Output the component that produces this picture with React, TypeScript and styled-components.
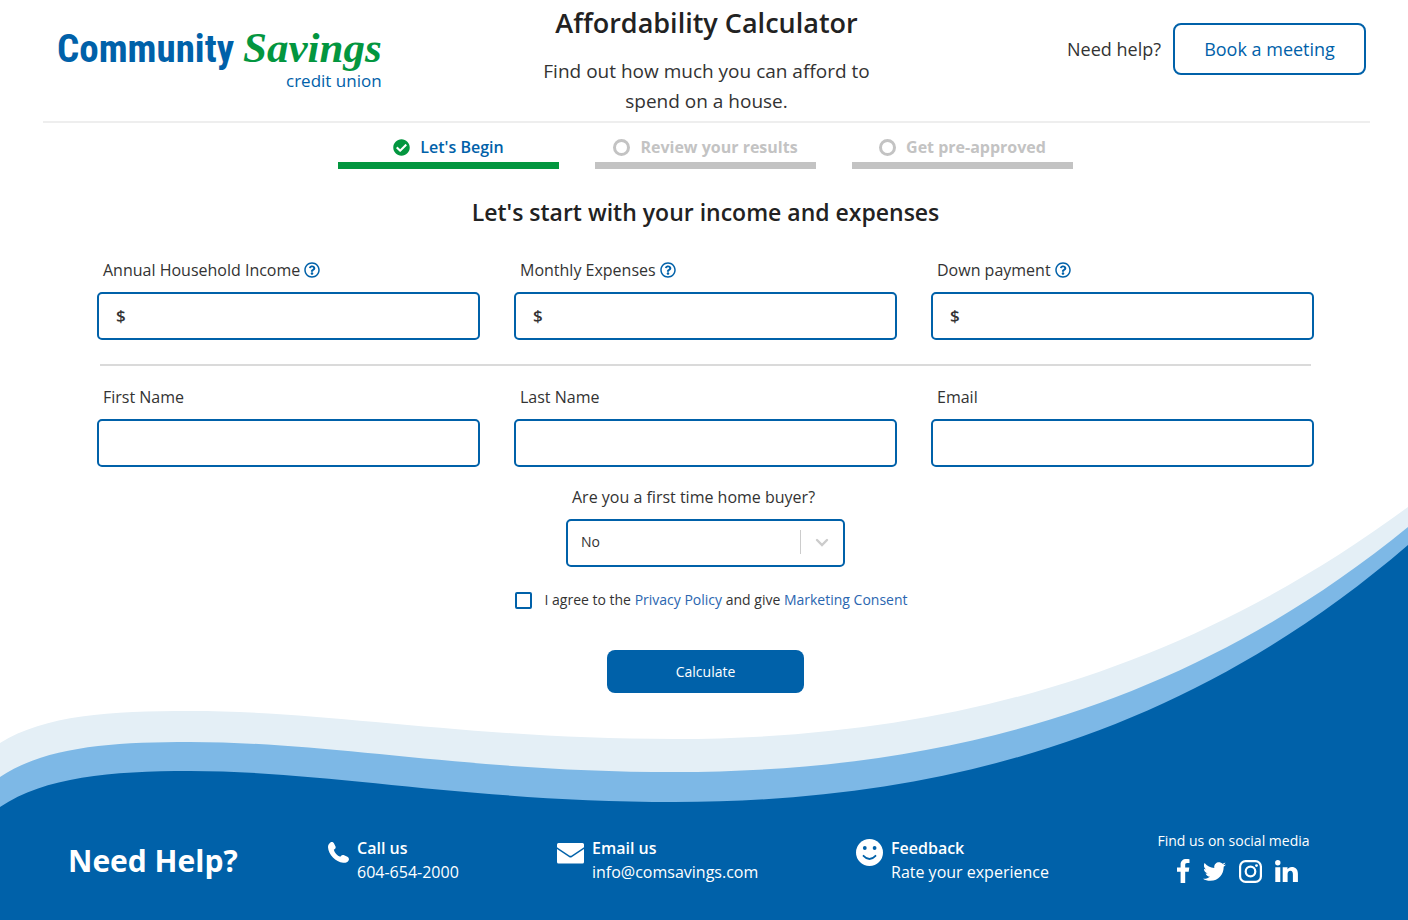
import React, { useState } from "react";
import styled, { createGlobalStyle } from "styled-components";
import { FaCheckCircle, FaRegQuestionCircle, FaTwitter } from "react-icons/fa";

const blue = "#0061a9";
const green = "#03963f";
const grey = "#c3c3c3";
const ink = "#333333";
const sans = `"Open Sans", "Noto Sans", sans-serif`;

const GlobalStyle = createGlobalStyle`
  *, *::before, *::after { box-sizing: border-box; }
  body { margin: 0; background: #fff; color: ${ink}; font-family: ${sans}; }
  h1, h2, p { margin: 0; }
  a { color: inherit; text-decoration: none; }
  button, input, select { font-family: inherit; color: inherit; }
`;

const Page = styled.div`
  position: relative;
  min-height: 100vh;
  display: flex;
  flex-direction: column;
`;

const Waves = styled.svg`
  position: absolute;
  left: 0;
  bottom: 0;
  width: 100%;
  height: 414px;
  z-index: -1;
`;

const Header = styled.header`
  display: grid;
  grid-template-columns: minmax(0, 1fr) 360px minmax(0, 1fr);
  margin: 0 38px 0 43px;
  padding: 5px 0;
  border-bottom: 2px solid #eeeeee;
`;

const Logo = styled.a`
  justify-self: start;
  display: flex;
  flex-direction: column;
  align-items: flex-end;
  padding: 19px 0 0 14px;
`;

const LogoName = styled.span`
  display: flex;
  align-items: baseline;
  gap: 9px;
  line-height: 48px;
  white-space: nowrap;
`;

const LogoCommunity = styled.span`
  font: bold 39px/48px "Roboto Condensed", Roboto, sans-serif;
  color: ${blue};
`;

const LogoSavings = styled.span`
  font: italic bold 43px/48px "Liberation Serif", serif;
  color: ${green};
`;

const LogoTag = styled.span`
  font-size: 17px;
  line-height: 16px;
  color: ${blue};
`;

const Intro = styled.div`
  text-align: center;
`;

const Title = styled.h1`
  font-size: 27px;
  line-height: 36px;
  font-weight: 600;
  color: #222;
`;

const Subtitle = styled.p`
  margin-top: 15px;
  font-size: 19px;
  line-height: 30px;
`;

const HelpBar = styled.div`
  display: flex;
  justify-content: flex-end;
  align-items: center;
  align-self: start;
  gap: 12px;
  padding: 18px 4px 0 0;
  font-size: 18px;
  white-space: nowrap;
`;

const MeetingButton = styled.button`
  width: 193px;
  height: 52px;
  padding-bottom: 2px;
  border: 2px solid ${blue};
  border-radius: 8px;
  background: #fff;
  color: ${blue};
  font-size: 18px;
  cursor: pointer;
`;

const Steps = styled.ol`
  list-style: none;
  display: flex;
  justify-content: center;
  gap: 36px;
  margin: 12px 0 0 3px;
  padding: 0;
`;

const Step = styled.li<{ $active?: boolean }>`
  display: flex;
  justify-content: center;
  align-items: center;
  gap: 10px;
  width: 221px;
  padding-bottom: 3px;
  border-bottom: 7px solid ${(p) => (p.$active ? green : grey)};
  color: ${(p) => (p.$active ? blue : grey)};
  font-size: 16px;
  line-height: 24px;
  font-weight: ${(p) => (p.$active ? 600 : 700)};
  svg { color: ${green}; }
`;

const Ring = styled.span`
  width: 17px;
  height: 17px;
  border: 3px solid ${grey};
  border-radius: 50%;
`;

const Form = styled.form`
  display: flex;
  flex-direction: column;
  padding: 0 94px 0 97px;
`;

const FormTitle = styled.h2`
  margin: 27px 0 30px;
  text-align: center;
  font-size: 23px;
  line-height: 32px;
  font-weight: 600;
  color: #222;
`;

const Row = styled.div`
  display: grid;
  grid-template-columns: repeat(3, 1fr);
  gap: 34px;
`;

const Field = styled.div`
  min-width: 0;
`;

const Label = styled.label`
  display: flex;
  align-items: center;
  gap: 4px;
  padding: 0 6px;
  margin-bottom: 10px;
  font-size: 16px;
  line-height: 24px;
  svg { color: ${blue}; }
`;

const InputBox = styled.div`
  display: flex;
  align-items: center;
  height: 48px;
  padding: 0 0 2px 17px;
  border: 2px solid ${blue};
  border-radius: 5px;
  background: #fff;
  font-size: 17px;
  font-weight: 600;
`;

const Input = styled.input`
  flex: 1;
  min-width: 0;
  border: 0;
  outline: 0;
  background: transparent;
  font-size: 16px;
`;

const Divider = styled.hr`
  height: 2px;
  margin: 24px 3px 19px;
  border: 0;
  background: #dadada;
`;

const BuyerField = styled.div`
  align-self: center;
  width: 279px;
  margin-top: 18px;
`;

const SelectBox = styled.div`
  position: relative;
  height: 48px;
  border: 2px solid ${blue};
  border-radius: 5px;
  background: #fff;
`;

const Select = styled.select`
  width: 100%;
  height: 100%;
  padding: 0 60px 4px 13px;
  border: 0;
  outline: 0;
  appearance: none;
  background: transparent;
  font-size: 14px;
`;

const SelectMark = styled.span`
  position: absolute;
  top: 9px;
  right: 11px;
  display: flex;
  align-items: center;
  height: 24px;
  padding-left: 11px;
  border-left: 1px solid #cccccc;
  pointer-events: none;
`;

const Consent = styled.div`
  align-self: center;
  display: flex;
  align-items: center;
  gap: 12px;
  margin: 21px 0 38px 12px;
  font-size: 14px;
  line-height: 24px;
  a { color: #2a66b0; }
`;

const Checkbox = styled.input`
  appearance: none;
  width: 17px;
  height: 17px;
  margin: 0;
  border: 2px solid ${blue};
  border-radius: 2px;
  background: #fff;
  &:checked { background: ${blue}; }
`;

const Submit = styled.button`
  align-self: center;
  width: 197px;
  height: 43px;
  padding-bottom: 2px;
  border: 0;
  border-radius: 8px;
  background: ${blue};
  color: #fff;
  font-size: 14px;
  font-weight: 500;
  cursor: pointer;
`;

const Footer = styled.footer`
  display: grid;
  grid-template-columns: 260fr 229fr 299fr 301fr 153fr;
  margin-top: auto;
  padding: 122px 98px 27px 68px;
  color: #fff;
`;

const FooterTitle = styled.h2`
  align-self: center;
  font-size: 30px;
  line-height: 40px;
  font-weight: 700;
  white-space: nowrap;
`;

const Contact = styled.a`
  display: flex;
  gap: 8px;
  align-self: center;
  padding-bottom: 2px;
  font-size: 16px;
  line-height: 24px;
  white-space: nowrap;
  svg { flex: none; margin-top: 3px; }
  strong { display: block; font-weight: 600; }
`;

const Social = styled.div`
  display: flex;
  flex-direction: column;
  align-items: center;
  gap: 6px;
  padding-bottom: 10px;
  font-size: 14px;
  line-height: 24px;
  white-space: nowrap;
`;

const SocialLinks = styled.div`
  display: flex;
  align-items: center;
  gap: 13px;
  padding-left: 6px;
  a, svg { display: block; }
`;

const PhoneIcon = () => (
  <svg width="21" height="27" viewBox="0 -3 21 27" fill="#fff" aria-hidden="true">
    <path d="M2.400.5C3.600-.3 5.200.1 5.900 1.300l1.500 3c.6 1.200.2 2.400-.9 3l-.7.4c.7 3 3.400 6 6.500 7l.6-.8c.8-1 2.100-1.300 3.200-.7l3.300 1.600c1.300.7 1.900 2.100 1.300 3.400-1 2-3.200 2.900-5.500 2.600C7.600 20 .5 12.600 0 5.300 0 3.300.9 1.500 2.400.5z" />
  </svg>
);

const MailIcon = () => (
  <svg width="27" height="27" viewBox="0 -4 27 27" fill="#fff" aria-hidden="true">
    <path d="M1.500 0h24A1.500 1.500 0 0 1 27 1.500V4.300L15 12.200q-1.500 1-3 0L0 4.300V1.500A1.500 1.500 0 0 1 1.500 0z" />
    <path d="M0 5.900l12 8.100q1.500 1 3 0l12-8.100V19a1.500 1.500 0 0 1-1.500 1.500h-24A1.500 1.500 0 0 1 0 19z" />
  </svg>
);

const SmileIcon = () => (
  <svg width="27" height="27" viewBox="0 0 27 27" aria-hidden="true">
    <circle cx="13.500" cy="13.500" r="13.500" fill="#fff" />
    <circle cx="8.800" cy="9" r="1.900" fill={blue} />
    <circle cx="18.600" cy="9" r="1.900" fill={blue} />
    <path d="M7.500 16.800q6 6.400 12 0" fill="none" stroke={blue} strokeWidth="1.800" strokeLinecap="round" />
  </svg>
);

const FacebookIcon = () => (
  <svg width="14" height="24" viewBox="0 0 14 24" fill="#fff" aria-hidden="true">
    <path d="M13.500.2V4h-2.300C9.500 4 9.200 4.900 9.200 6v2.600h4.100l-.6 4.200H9.200V24H4.600V12.800H1V8.600h3.600V5.500C4.600 2 7 0 10.200 0c1.500 0 2.900.1 3.300.2z" />
  </svg>
);

const InstagramIcon = () => (
  <svg width="23" height="23" viewBox="0 0 23 23" fill="none" stroke="#fff" aria-hidden="true">
    <rect x="1.100" y="1.100" width="20.800" height="20.800" rx="5.500" strokeWidth="2.200" />
    <circle cx="11.500" cy="11.500" r="4.800" strokeWidth="2.200" />
    <circle cx="17.500" cy="5.600" r="1.400" fill="#fff" stroke="none" />
  </svg>
);

const LinkedInIcon = () => (
  <svg width="23" height="22" viewBox="0 0 23 22" fill="#fff" aria-hidden="true">
    <circle cx="2.800" cy="2.700" r="2.700" />
    <path d="M.3 7.300h5V22h-5zM7.700 7.300h4.800v2c.8-1.300 2.100-2.400 4.300-2.400 3.700 0 6.100 2.300 6.100 6.800V22h-5v-7.800c0-2.100-.8-3.400-2.400-3.400-1.900 0-2.900 1.400-2.900 3.500V22H7.700z" />
  </svg>
);

const moneyFields = [
  { id: "income", label: "Annual Household Income" },
  { id: "expenses", label: "Monthly Expenses" },
  { id: "down", label: "Down payment" },
];

const personFields = [
  { id: "first", label: "First Name", type: "text" },
  { id: "last", label: "Last Name", type: "text" },
  { id: "email", label: "Email", type: "email" },
];

export default function App() {
  const [agreed, setAgreed] = useState(false);

  return (
    <Page>
      <GlobalStyle />
      <Waves viewBox="0 506 1408 414" preserveAspectRatio="none" aria-hidden="true">
        <path
          fill="#e4eff6"
          d="M0 743C45 715 110 711 190 711C330 711 470 739 675 739C960 739 1195 664 1408 507V920H0Z"
        />
        <path
          fill="#7db8e6"
          d="M0 777C45 747 110 742 190 742C330 742 470 772 675 772C960 772 1200 697 1408 527V920H0Z"
        />
        <path
          fill={blue}
          d="M0 807C45 777 110 771 190 771C330 771 470 802 675 802C960 802 1200 724 1408 545V920H0Z"
        />
      </Waves>

      <Header>
        <Logo href="#">
          <LogoName>
            <LogoCommunity>Community</LogoCommunity>
            <LogoSavings>Savings</LogoSavings>
          </LogoName>
          <LogoTag>credit union</LogoTag>
        </Logo>
        <Intro>
          <Title>Affordability Calculator</Title>
          <Subtitle>Find out how much you can afford to spend on a house.</Subtitle>
        </Intro>
        <HelpBar>
          <span>Need help?</span>
          <MeetingButton type="button">Book a meeting</MeetingButton>
        </HelpBar>
      </Header>

      <Steps>
        <Step $active aria-current="step">
          <FaCheckCircle size={17} />
          Let's Begin
        </Step>
        <Step>
          <Ring />
          Review your results
        </Step>
        <Step>
          <Ring />
          Get pre-approved
        </Step>
      </Steps>

      <Form onSubmit={(e) => e.preventDefault()}>
        <FormTitle>Let's start with your income and expenses</FormTitle>
        <Row>
          {moneyFields.map((f) => (
            <Field key={f.id}>
              <Label htmlFor={f.id}>
                {f.label}
                <FaRegQuestionCircle size={16} />
              </Label>
              <InputBox>
                $
                <Input id={f.id} inputMode="decimal" />
              </InputBox>
            </Field>
          ))}
        </Row>
        <Divider />
        <Row>
          {personFields.map((f) => (
            <Field key={f.id}>
              <Label htmlFor={f.id}>{f.label}</Label>
              <InputBox>
                <Input id={f.id} type={f.type} />
              </InputBox>
            </Field>
          ))}
        </Row>

        <BuyerField>
          <Label htmlFor="buyer">Are you a first time home buyer?</Label>
          <SelectBox>
            <Select id="buyer" defaultValue="No">
              <option>No</option>
              <option>Yes</option>
            </Select>
            <SelectMark>
              <svg width="20" height="20" viewBox="0 0 20 20" fill="none" stroke="#cccccc" strokeWidth="2.400" strokeLinecap="round">
                <path d="M5 8l5 5 5-5" />
              </svg>
            </SelectMark>
          </SelectBox>
        </BuyerField>

        <Consent>
          <Checkbox
            id="agree"
            type="checkbox"
            checked={agreed}
            onChange={(e) => setAgreed(e.target.checked)}
          />
          <label htmlFor="agree">
            I agree to the <a href="#privacy">Privacy Policy</a> and give{" "}
            <a href="#marketing">Marketing Consent</a>
          </label>
        </Consent>

        <Submit type="submit">Calculate</Submit>
      </Form>

      <Footer>
        <FooterTitle>Need Help?</FooterTitle>
        <Contact href="tel:6046542000">
          <PhoneIcon />
          <span>
            <strong>Call us</strong>
            604-654-2000
          </span>
        </Contact>
        <Contact href="mailto:info@comsavings.com">
          <MailIcon />
          <span>
            <strong>Email us</strong>
            info@comsavings.com
          </span>
        </Contact>
        <Contact href="#feedback">
          <SmileIcon />
          <span>
            <strong>Feedback</strong>
            Rate your experience
          </span>
        </Contact>
        <Social>
          Find us on social media
          <SocialLinks>
            <a href="#facebook" aria-label="Facebook"><FacebookIcon /></a>
            <a href="#twitter" aria-label="Twitter"><FaTwitter size={23} /></a>
            <a href="#instagram" aria-label="Instagram"><InstagramIcon /></a>
            <a href="#linkedin" aria-label="LinkedIn"><LinkedInIcon /></a>
          </SocialLinks>
        </Social>
      </Footer>
    </Page>
  );
}
